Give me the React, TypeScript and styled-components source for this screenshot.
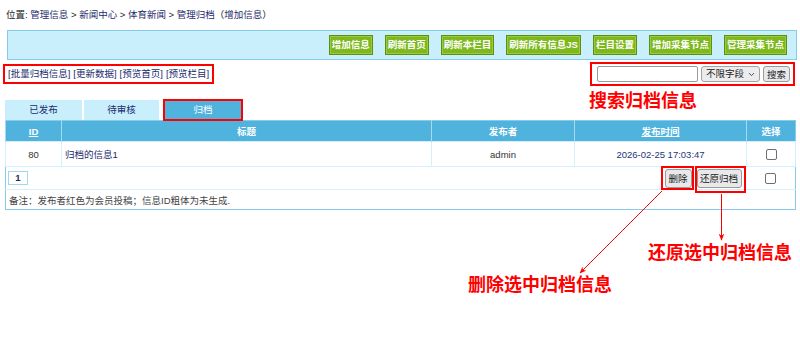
import { FC } from "react"
import styled, { createGlobalStyle } from "styled-components"
import { ChevronDown } from "lucide-react"

const GlobalStyle = createGlobalStyle`
  body {
    margin: 0;
    background: #fff;
    font-family: "Liberation Sans", "Noto Sans CJK SC", sans-serif;
    font-size: 9.5px;
    color: #333;
  }
`

const Page = styled.div`
  position: relative;
  width: 800px;
  height: 343px;
  overflow: hidden;
`

const Breadcrumb = styled.div`
  padding: 9px 0 0 6px;
  line-height: 12px;
  color: #222;
  & a {
    color: #1d2c6b;
    text-decoration: none;
  }
`

const Toolbar = styled.div`
  margin: 9px 3px 0 7px;
  height: 28px;
  border: 1px solid #86cbe9;
  background: #c9effd;
  display: flex;
  justify-content: flex-end;
  align-items: center;
  gap: 12px;
  padding-right: 9px;
`

const ToolButton = styled.button`
  height: 20px;
  padding: 0 2px;
  border: 1px solid #5e8f12;
  box-shadow: inset 0 0 0 1px #98cb3e;
  background: #7db81d;
  color: #fff;
  font: bold 9.5px "Liberation Sans", "Noto Sans CJK SC", sans-serif;
  line-height: 18px;
  white-space: nowrap;
`

const ActionRow = styled.div`
  display: flex;
  justify-content: space-between;
  align-items: center;
  margin-top: 2px;
  padding: 0 5px 0 3px;
  height: 24px;
`

const LinkBox = styled.div`
  border: 2px solid #f00;
  padding: 0 3px;
  line-height: 16px;
  display: flex;
  gap: 3px;
  & a {
    color: #1d2c6b;
    text-decoration: none;
  }
`

const SearchBox = styled.div`
  border: 2px solid #f00;
  height: 20px;
  padding: 0 3px 0 5px;
  display: flex;
  align-items: center;
  gap: 3px;
`

const SearchInput = styled.input`
  box-sizing: border-box;
  width: 101px;
  height: 16px;
  border: 1px solid #9a9a9a;
  border-radius: 2px;
  padding: 0;
`

const FieldSelect = styled.div`
  box-sizing: border-box;
  width: 59px;
  height: 16px;
  padding: 0 3px 0 4px;
  border: 1px solid #a3a3a3;
  border-radius: 3px;
  background: #ececef;
  color: #222;
  display: flex;
  align-items: center;
  justify-content: space-between;
  line-height: 14px;
`

const GrayButton = styled.button<{ $w: number; $h: number }>`
  box-sizing: border-box;
  width: ${(p) => p.$w}px;
  height: ${(p) => p.$h}px;
  padding: 0;
  border: 1px solid #9a9a9a;
  border-radius: 3px;
  background: #e9e9ec;
  color: #222;
  font: 9.5px "Liberation Sans", "Noto Sans CJK SC", sans-serif;
`

// red annotation frame; negative margins keep it from growing the row
const RedFrame = styled.span<{ $pad: string; $margin: string }>`
  display: inline-flex;
  border: 2px solid #f00;
  padding: ${(p) => p.$pad};
  margin: ${(p) => p.$margin};
`

const Tabs = styled.div`
  margin-top: 14px;
  display: flex;
  gap: 2px;
  padding-left: 5px;
`

const Tab = styled.div<{ $w: number; $active?: boolean }>`
  width: ${(p) => p.$w}px;
  height: 20px;
  line-height: 20px;
  text-align: center;
  background: ${(p) => (p.$active ? "#4fb3de" : "#c9effd")};
  color: ${(p) => (p.$active ? "#fff" : "#1d2c6b")};
  outline: ${(p) => (p.$active ? "2px solid #f00" : "none")};
  outline-offset: -1px;
  margin-left: ${(p) => (p.$active ? 3 : 0)}px;
`

const Table = styled.table`
  margin: 0 5px;
  width: 790px;
  border-collapse: collapse;
  table-layout: fixed;
  border: 1px solid #86cbe9;
`

const Th = styled.th<{ $link?: boolean }>`
  height: 20px;
  padding: 0;
  background: #4fb3de;
  color: #fff;
  font-weight: bold;
  border-left: 1px solid #a4dbf1;
  text-decoration: ${(p) => (p.$link ? "underline" : "none")};
`

const Td = styled.td<{ $align?: string; $color?: string }>`
  height: 24px;
  padding: 0 3px;
  border: 1px solid #d4f0fb;
  text-align: ${(p) => p.$align || "center"};
  color: ${(p) => p.$color || "#333"};
`

const FooterTd = styled.td`
  height: 22px;
  padding: 0 2px 0 2px;
  border-top: 1px solid #86cbe9;
  border-bottom: 1px solid #d4f0fb;
  text-align: center;
`

const FooterBar = styled.div`
  display: flex;
  align-items: center;
  justify-content: space-between;
`

const PageNum = styled.span`
  box-sizing: border-box;
  width: 20px;
  height: 14px;
  border: 1px solid #a6d6ee;
  color: #1d2c6b;
  font-weight: bold;
  line-height: 12px;
  text-align: center;
`

const ButtonGroup = styled.div`
  display: flex;
  align-items: flex-start;
  gap: 1px;
  height: 19px;
`

const NoteTd = styled.td`
  height: 19px;
  padding: 0 3px;
  color: #444;
`

const Check = styled.span`
  display: inline-block;
  vertical-align: middle;
  box-sizing: border-box;
  width: 11px;
  height: 11px;
  border: 1px solid #6e6e78;
  border-radius: 2px;
  background: #fff;
`

const Label = styled.div<{ $x: number; $y: number }>`
  position: absolute;
  left: ${(p) => p.$x}px;
  top: ${(p) => p.$y}px;
  color: #f00;
  font: bold 18px "Noto Sans CJK SC", sans-serif;
  line-height: 20px;
  white-space: nowrap;
`

const Arrows = styled.svg`
  position: absolute;
  left: 0;
  top: 0;
  pointer-events: none;
`

const links = ["批量归档信息", "更新数据", "预览首页", "预览栏目"]
const tools = ["增加信息", "刷新首页", "刷新本栏目", "刷新所有信息JS", "栏目设置", "增加采集节点", "管理采集节点"]

const App: FC = () => {
  return (
    <Page>
      <GlobalStyle />
      <Breadcrumb>
        位置: <a>管理信息</a> &gt; <a>新闻中心</a> &gt; <a>体育新闻</a> &gt; <a>管理归档</a>（<a>增加信息</a>）
      </Breadcrumb>
      <Toolbar>
        {tools.map((t) => (
          <ToolButton key={t}>{t}</ToolButton>
        ))}
      </Toolbar>
      <ActionRow>
        <LinkBox>
          {links.map((l) => (
            <a key={l}>[{l}]</a>
          ))}
        </LinkBox>
        <SearchBox>
          <SearchInput />
          <FieldSelect>
            不限字段 <ChevronDown size={9} strokeWidth={2.5} color="#444" />
          </FieldSelect>
          <GrayButton $w={27} $h={16}>
            搜索
          </GrayButton>
        </SearchBox>
      </ActionRow>
      <Tabs>
        <Tab $w={77}>已发布</Tab>
        <Tab $w={75}>待审核</Tab>
        <Tab $w={78} $active>
          归档
        </Tab>
      </Tabs>
      <Table>
        <colgroup>
          <col style={{ width: 56 }} />
          <col style={{ width: 370 }} />
          <col style={{ width: 143 }} />
          <col style={{ width: 172 }} />
          <col style={{ width: 49 }} />
        </colgroup>
        <thead>
          <tr>
            <Th $link>ID</Th>
            <Th>标题</Th>
            <Th>发布者</Th>
            <Th $link>发布时间</Th>
            <Th>选择</Th>
          </tr>
        </thead>
        <tbody>
          <tr>
            <Td>80</Td>
            <Td $align="left" $color="#1d2c6b">
              归档的信息1
            </Td>
            <Td>admin</Td>
            <Td $color="#25357a">2026-02-25 17:03:47</Td>
            <Td>
              <Check />
            </Td>
          </tr>
          <tr>
            <FooterTd colSpan={4}>
              <FooterBar>
                <PageNum>1</PageNum>
                <ButtonGroup>
                  <RedFrame $pad="1px 0 0 2px" $margin="-3px 0 0 0">
                    <GrayButton $w={27} $h={19}>
                      删除
                    </GrayButton>
                  </RedFrame>
                  <RedFrame $pad="1px 2px 3px 0" $margin="-3px -1px 0 0">
                    <GrayButton $w={45} $h={19}>
                      还原归档
                    </GrayButton>
                  </RedFrame>
                </ButtonGroup>
              </FooterBar>
            </FooterTd>
            <FooterTd>
              <Check />
            </FooterTd>
          </tr>
          <tr>
            <NoteTd colSpan={5}>备注：发布者红色为会员投稿；信息ID粗体为未生成.</NoteTd>
          </tr>
        </tbody>
      </Table>

      <Label $x={589} $y={89}>
        搜索归档信息
      </Label>
      <Label $x={648} $y={241}>
        还原选中归档信息
      </Label>
      <Label $x={468} $y={273}>
        删除选中归档信息
      </Label>
      <Arrows width={800} height={343}>
        <defs>
          <marker id="head" viewBox="0 0 10 10" refX="9" refY="5" markerWidth="7" markerHeight="7" orient="auto">
            <path d="M0 1 L10 5 L0 9 L3 5 Z" fill="#f00" />
          </marker>
        </defs>
        <line x1={721.5} y1={194} x2={721.5} y2={240} stroke="#f00" strokeWidth={1} markerEnd="url(#head)" />
        <line x1={662} y1={191} x2={580} y2={273} stroke="#f00" strokeWidth={1} markerEnd="url(#head)" />
      </Arrows>
    </Page>
  )
}

export default App
